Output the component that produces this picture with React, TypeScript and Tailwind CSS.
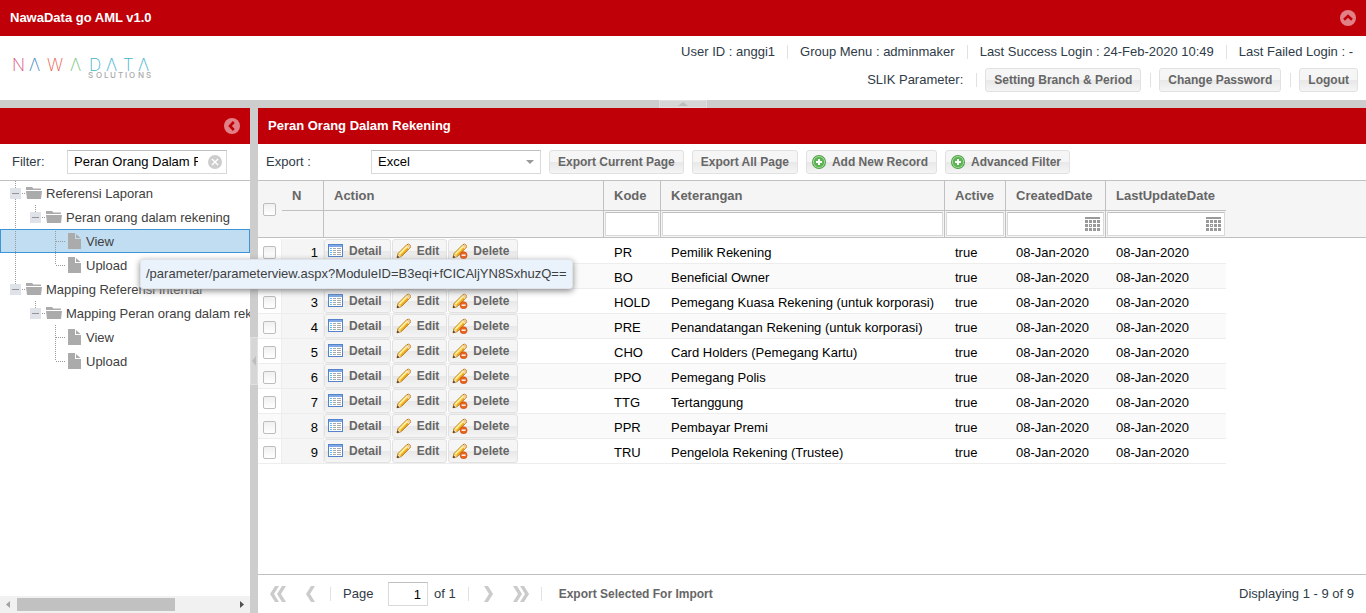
import React, { useState } from "react";

const BTN =
  "flex h-6 shrink-0 items-center whitespace-nowrap rounded-[3px] border border-[#e1e1e1] bg-[linear-gradient(#f6f6f6,#f5f5f5_50%,#e8e8e8_51%,#f5f5f5)] text-[12px] font-bold text-[#666]";

function Separator() {
  return <span className="h-3.5 w-px shrink-0 bg-[#e1e1e1]" />;
}

function TextButton({ children }: { children: React.ReactNode }) {
  return <button className={`${BTN} px-2`}>{children}</button>;
}

function Logo() {
  return (
    <svg role="img" aria-label="Nawadata Solutions" width="150" height="40" viewBox="0 0 150 40" className="ml-3 mt-3 shrink-0">
      <g fontFamily="Inter, sans-serif" fontWeight="200" fontSize="17">
        <text x="0" y="23" fill="#d8527f">N</text>
        <text x="17" y="23" fill="#4287bd">Λ</text>
        <text x="35" y="23" fill="#e8604f">W</text>
        <text x="58" y="23" fill="#76c27a">Λ</text>
        <text x="77" y="23" fill="#41b3cf">D</text>
        <text x="94" y="23" fill="#41b3cf">Λ</text>
        <text x="111" y="23" fill="#41b3cf">T</text>
        <text x="126" y="23" fill="#41b3cf">Λ</text>
      </g>
      <text x="76 84 92 98 106 113 117 126 134" y="30" fill="#a9a9a9" fontFamily="Inter, sans-serif" fontWeight="500" fontSize="8">
        SOLUTIONS
      </text>
    </svg>
  );
}

function CircleChevron({ up }: { up?: boolean }) {
  return (
    <svg width="16" height="16" viewBox="0 0 16 16">
      <circle cx="8" cy="8" r="8" fill="#e28087" />
      <path d={up ? "M4 9.8 8 6l4 3.8" : "M9.8 4 6 8l3.8 4"} fill="none" stroke="#c00008" strokeWidth="2.6" />
    </svg>
  );
}

function PlusIcon() {
  return (
    <svg width="16" height="16" viewBox="0 0 16 16">
      <circle cx="8" cy="8" r="7" fill="#4aa046" />
      <circle cx="8" cy="8" r="6" fill="#b5e0a9" />
      <circle cx="8" cy="8" r="5.2" fill="#5cb452" />
      <path d="M8 5v6M5 8h6" stroke="#fff" strokeWidth="2" />
    </svg>
  );
}

function DetailIcon() {
  return (
    <svg width="16" height="16" viewBox="0 0 16 16">
      <rect x=".5" y="1.5" width="14" height="12" fill="#fff" stroke="#5683c8" />
      <rect x="1" y="2" width="13" height="2" fill="#7ea9e6" />
      <path d="M2 5.5h2M2 7.5h2M2 9.5h2M2 11.5h2" stroke="#62bdf0" />
      <path d="M5 5.5h3M9 5.5h4M5 7.5h3M9 7.5h4M5 9.5h3M9 9.5h4M5 11.5h3M9 11.5h4" stroke="#a9a9a9" />
    </svg>
  );
}

function PencilIcon({ remove }: { remove?: boolean }) {
  return (
    <svg width="16" height="16" viewBox="0 0 16 16">
      <path d="M1 14.8 2 10.6 10.8 1.7Q12.4.6 13.8 1.7 15.2 3 14.2 4.7L5.3 13.6Z" fill="#f6cf45" stroke="#b77b22" />
      <path d="M3.4 11 11 3.2" stroke="#fff2a2" strokeWidth="1.5" />
      <path d="m5 12.6 7.9-7.8" stroke="#e79d22" strokeWidth="1.2" />
      <path d="m10.4 2.8 2.8 2.6" stroke="#f2e2cc" strokeWidth="1.4" />
      <path d="M12 2.2Q13.8 2.4 13.9 4" stroke="#f3c79c" strokeWidth="1.8" fill="none" />
      <path d="M1.4 14.4 2.2 11.2 4.8 13.5Z" fill="#f3d9b4" />
      <path d="m.8 15 .7-2.6 1.9 1.9Z" fill="#49331c" />
      {remove && (
        <>
          <circle cx="11.6" cy="12.2" r="3.5" fill="#e9641c" stroke="#c9480b" strokeWidth=".6" />
          <path d="M9.6 12.2h4" stroke="#fff" strokeWidth="1.4" />
        </>
      )}
    </svg>
  );
}

function CalendarIcon() {
  return (
    <svg width="15" height="14" viewBox="0 0 15 14" fill="#999" shapeRendering="crispEdges">
      <rect width="15" height="2" />
      {[3, 7, 11].map((y) =>
        [0, 4, 8, 12].map((x) => <rect key={`${x}-${y}`} x={x} y={y} width="3" height="3" />)
      )}
      <path d="M5 8h1v1H5z" fill="#fff" />
    </svg>
  );
}

const DOTS = { stroke: "#9a9a9a", strokeDasharray: "1 1", shapeRendering: "crispEdges" as const };

function Elbow({ kind }: { kind: "blank" | "line" | "minus" | "minusEnd" | "tee" | "end" }) {
  const full = kind === "line" || kind === "minus" || kind === "tee";
  const half = kind === "end" || kind === "minusEnd";
  const box = kind.startsWith("minus");
  return (
    <svg width="20" height="24" viewBox="0 0 20 24" className="shrink-0">
      {full && <path d="M9.5 0v24" {...DOTS} />}
      {half && <path d="M9.5 0v12" {...DOTS} />}
      {(box || kind === "tee" || kind === "end") && <path d="M10 12.5h9" {...DOTS} />}
      {box && (
        <>
          <rect x="4" y="7" width="11" height="11" fill="#dfe3e9" />
          <path d="M6 12.5h7" stroke="#8f959b" shapeRendering="crispEdges" />
        </>
      )}
    </svg>
  );
}

function FolderIcon() {
  return (
    <svg width="20" height="16" viewBox="0 0 20 16" fill="#ababab" className="shrink-0">
      <path d="M0 2h6l1.5 1.5H15V5H0zM0 6h16l-1 8H1z" />
    </svg>
  );
}

function FileIcon() {
  return (
    <svg width="20" height="16" viewBox="0 0 20 16" fill="#ababab" className="shrink-0">
      <path d="M2 0h7v6h6v10H2zM10 1l4.5 4H10z" />
    </svg>
  );
}

type Kind = React.ComponentProps<typeof Elbow>["kind"];
const TREE: { id: number; elbows: Kind[]; label: string; leaf?: boolean }[] = [
  { id: 1, elbows: ["minus"], label: "Referensi Laporan" },
  { id: 2, elbows: ["line", "minusEnd"], label: "Peran orang dalam rekening" },
  { id: 3, elbows: ["line", "blank", "tee"], label: "View", leaf: true },
  { id: 4, elbows: ["line", "blank", "end"], label: "Upload", leaf: true },
  { id: 5, elbows: ["minusEnd"], label: "Mapping Referensi Internal" },
  { id: 6, elbows: ["blank", "minusEnd"], label: "Mapping Peran orang dalam rekening" },
  { id: 7, elbows: ["blank", "blank", "tee"], label: "View", leaf: true },
  { id: 8, elbows: ["blank", "blank", "end"], label: "Upload", leaf: true },
];

const ROWS = [
  ["PR", "Pemilik Rekening"],
  ["BO", "Beneficial Owner"],
  ["HOLD", "Pemegang Kuasa Rekening (untuk korporasi)"],
  ["PRE", "Penandatangan Rekening (untuk korporasi)"],
  ["CHO", "Card Holders (Pemegang Kartu)"],
  ["PPO", "Pemegang Polis"],
  ["TTG", "Tertanggung"],
  ["PPR", "Pembayar Premi"],
  ["TRU", "Pengelola Rekening (Trustee)"],
];

function Header() {
  return (
    <header className="shrink-0">
      <div className="flex h-9 items-center justify-between bg-[#c00008] pl-2.5 pr-2.5">
        <h1 className="text-[13px] font-bold text-white">NawaData go AML v1.0</h1>
        <button aria-label="Collapse header">
          <CircleChevron up />
        </button>
      </div>
      <div className="flex h-16 items-start justify-between">
        <Logo />
        <div className="flex flex-col items-end gap-1 pr-2 pt-1 text-[13px] text-[#2f3b47]">
          <div className="flex h-6 items-center gap-3 whitespace-nowrap pr-[5px]">
            <span>User ID : anggi1</span>
            <Separator />
            <span>Group Menu : adminmaker</span>
            <Separator />
            <span>Last Success Login : 24-Feb-2020 10:49</span>
            <Separator />
            <span>Last Failed Login : -</span>
          </div>
          <div className="flex h-6 items-center gap-2 whitespace-nowrap">
            <span className="pr-[5px]">SLIK Parameter:</span>
            <Separator />
            <div className="pr-px">
              <TextButton>Setting Branch &amp; Period</TextButton>
            </div>
            <Separator />
            <div className="pr-px">
              <TextButton>Change Password</TextButton>
            </div>
            <Separator />
            <TextButton>Logout</TextButton>
          </div>
        </div>
      </div>
    </header>
  );
}

function Sidebar() {
  const [filter, setFilter] = useState("Peran Orang Dalam Rekening");
  const [selected, setSelected] = useState(3);
  return (
    <aside className="flex w-[250px] shrink-0 flex-col">
      <div className="flex h-9 shrink-0 items-center justify-end bg-[#c00008] pr-2.5">
        <button aria-label="Collapse menu">
          <CircleChevron />
        </button>
      </div>
      <div className="flex h-[37px] shrink-0 items-center border-b border-[#c0c0c0] pl-3 text-[13px]">
        <label htmlFor="filter" className="w-[55px] text-[#2f3b47]">
          Filter:
        </label>
        <div className="flex h-6 w-40 items-center border border-[#d9d9d9] border-t-[#c0c0c0] pl-1.5 pr-1">
          <input
            id="filter"
            value={filter}
            onChange={(e) => setFilter(e.target.value)}
            className="w-[124px] text-black outline-none"
          />
          <button aria-label="Clear filter" onClick={() => setFilter("")} className="ml-auto">
            <svg width="14" height="14" viewBox="0 0 14 14">
              <circle cx="7" cy="7" r="7" fill="#cdcdcd" />
              <path d="m4 4 6 6m0-6-6 6" stroke="#fff" strokeWidth="1.4" />
            </svg>
          </button>
        </div>
      </div>
      <ul className="min-h-0 flex-1 overflow-hidden text-[13px] text-[#404040]">
        {TREE.map((n) => (
          <li key={n.id}>
            <button
              onClick={() => setSelected(n.id)}
              className={`flex h-6 w-full items-center whitespace-nowrap pl-1.5 ${
                selected === n.id ? "bg-[#c1ddf1] outline outline-1 -outline-offset-1 outline-[#3d94d6]" : ""
              }`}
            >
              {n.elbows.map((k, i) => (
                <Elbow key={i} kind={k} />
              ))}
              {n.leaf ? <FileIcon /> : <FolderIcon />}
              <span className="pt-0.5">{n.label}</span>
            </button>
          </li>
        ))}
      </ul>
      <div className="flex h-[17px] shrink-0 items-center bg-[#f1f1f1] px-1.5">
        <svg width="4" height="7" viewBox="0 0 4 7" fill="#a3a3a3">
          <path d="M4 0v7L0 3.5z" />
        </svg>
        <div className="flex-1 px-[7px]">
          <div className="h-[13px] w-[73%] bg-[#c1c1c1]" />
        </div>
        <svg width="4" height="7" viewBox="0 0 4 7" fill="#505050">
          <path d="M0 0v7l4-3.5z" />
        </svg>
      </div>
    </aside>
  );
}

const CHECK =
  "block size-[13px] appearance-none rounded-[2px] border border-[#bdbdbd] bg-[linear-gradient(#f0f0f0,#fff)] checked:bg-[#3d94d6]";
const TH = "border-b border-r border-[#c0c0c0] px-2.5 text-left font-bold";
const TF = "border-b border-r border-[#c0c0c0] p-px";
const TD = "border-b border-[#ededed] px-2.5 pt-1.5 align-top leading-[15px] whitespace-nowrap";

function FilterBox({ label, date }: { label: string; date?: boolean }) {
  return (
    <div className="flex h-6 items-center border border-[#d9d9d9] border-t-[#c0c0c0] bg-white">
      <input aria-label={label} className="h-5 w-full min-w-0 px-1 outline-none" />
      {date && (
        <button aria-label={`${label} calendar`} className="mr-[3px] shrink-0">
          <CalendarIcon />
        </button>
      )}
    </div>
  );
}

function Grid() {
  return (
    <table className="w-full table-fixed border-separate border-spacing-0 text-[13px]">
      <colgroup>
        <col className="w-6" />
        <col className="w-[42px]" />
        <col className="w-[280px]" />
        <col className="w-[57px]" />
        <col className="w-[284px]" />
        <col className="w-[61px]" />
        <col className="w-[100px]" />
        <col className="w-[120px]" />
        <col />
      </colgroup>
      <thead className="bg-[#f5f5f5] text-[#666]">
        <tr className="h-[30px]">
          <th rowSpan={2} className="border-b border-[#c0c0c0] pl-[5px]">
            <input type="checkbox" aria-label="Select all" className={CHECK} />
          </th>
          <th className={TH}>N</th>
          <th className={TH}>Action</th>
          <th className={TH}>Kode</th>
          <th className={TH}>Keterangan</th>
          <th className={TH}>Active</th>
          <th className={TH}>CreatedDate</th>
          <th className="border-b border-[#c0c0c0] px-2.5 text-left font-bold">LastUpdateDate</th>
          <th rowSpan={2} className="border-b border-[#c0c0c0]" />
        </tr>
        <tr className="h-[27px]">
          <td className={TF} />
          <td className={TF} />
          <td className={TF}><FilterBox label="Kode" /></td>
          <td className={TF}><FilterBox label="Keterangan" /></td>
          <td className={TF}><FilterBox label="Active" /></td>
          <td className={TF}><FilterBox label="CreatedDate" date /></td>
          <td className="border-b border-[#c0c0c0] p-px"><FilterBox label="LastUpdateDate" date /></td>
        </tr>
      </thead>
      <tbody className="text-black before:block before:h-px before:content-['']">
        {ROWS.map(([kode, ket], i) => (
          <tr key={kode} className="h-[25px] [&:nth-child(even)>td:not(:last-child)]:bg-[#fafafa]">
            <td className="border-b border-r border-[#ededed] pl-[5px] pt-[7px] align-top">
              <input type="checkbox" aria-label={`Select ${kode}`} className={CHECK} />
            </td>
            <td className="border-b border-r border-[#ededed] bg-[#f5f5f5]! pr-[5px] pt-1.5 text-right align-top leading-[15px]">{i + 1}</td>
            <td className="border-b border-[#ededed] p-0 align-top">
              <div className="flex gap-px">
                <button className={`${BTN} gap-[5px] pl-[3px] pr-2`}>
                  <DetailIcon />
                  Detail
                </button>
                <button className={`${BTN} gap-[5px] pl-[3px] pr-[7px]`}>
                  <PencilIcon />
                  Edit
                </button>
                <button className={`${BTN} gap-[5px] pl-[3px] pr-2`}>
                  <PencilIcon remove />
                  Delete
                </button>
              </div>
            </td>
            <td className={TD}>{kode}</td>
            <td className={TD}>{ket}</td>
            <td className={TD}>true</td>
            <td className={TD}>08-Jan-2020</td>
            <td className={TD}>08-Jan-2020</td>
            <td />
          </tr>
        ))}
      </tbody>
    </table>
  );
}

function PageArrow({ label, double, next }: { label: string; double?: boolean; next?: boolean }) {
  const one = next ? "M0 0h4l5 8-5 8H0l5-8z" : "M9 0H5L0 8l5 8h4L4 8z";
  const two = next ? "M7 0h4l5 8-5 8H7l5-8z" : "M16 0h-4L7 8l5 8h4l-5-8z";
  return (
    <button aria-label={label} className="flex w-6 shrink-0 justify-center">
      <svg width={double ? 16 : 9} height="16" viewBox={double ? "0 0 16 16" : "0 0 9 16"} fill="#cbcbcb">
        <path d={one} />
        {double && <path d={two} />}
      </svg>
    </button>
  );
}

function Pager() {
  return (
    <footer className="flex h-[39px] shrink-0 items-center whitespace-nowrap border-t border-[#c0c0c0] pl-2 pr-3 text-[13px] text-[#2f3b47]">
      <div className="flex items-center gap-2">
        <PageArrow label="First page" double />
        <PageArrow label="Previous page" />
      </div>
      <div className="ml-2 flex items-center">
        <Separator />
        <label htmlFor="page" className="ml-3 w-[45px]">Page</label>
        <input
          id="page"
          defaultValue="1"
          className="h-6 w-10 border border-[#d9d9d9] border-t-[#c0c0c0] pr-1.5 text-right text-black outline-none"
        />
        <span className="ml-1.5 mr-3">of 1</span>
        <Separator />
      </div>
      <div className="mx-2 flex items-center gap-2">
        <PageArrow label="Next page" next />
        <PageArrow label="Last page" double next />
      </div>
      <Separator />
      <button className="ml-[17px] text-[12px] font-bold text-[#666]">Export Selected For Import</button>
      <span className="ml-auto">Displaying 1 - 9 of 9</span>
    </footer>
  );
}

function MainPanel() {
  return (
    <main className="flex min-w-0 flex-1 flex-col">
      <div className="flex h-9 shrink-0 items-center bg-[#c00008] px-2.5">
        <h2 className="text-[13px] font-bold text-white">Peran Orang Dalam Rekening</h2>
      </div>
      <div className="flex h-[37px] shrink-0 items-center gap-2 border-b border-[#c0c0c0] pl-2 text-[13px]">
        <label htmlFor="export" className="w-[97px] text-[#2f3b47]">Export :</label>
        <div className="relative">
          <select
            id="export"
            className="block h-6 w-[170px] appearance-none border border-[#d9d9d9] border-t-[#c0c0c0] bg-white px-1.5 text-black outline-none"
          >
            <option>Excel</option>
          </select>
          <svg width="8" height="4" viewBox="0 0 8 4" fill="#999" className="pointer-events-none absolute right-[7px] top-2.5">
            <path d="M0 0h8L4 4z" />
          </svg>
        </div>
        <TextButton>Export Current Page</TextButton>
        <TextButton>Export All Page</TextButton>
        <button className={`${BTN} gap-[5px] pl-1 pr-2`}>
          <PlusIcon />
          Add New Record
        </button>
        <button className={`${BTN} gap-[5px] pl-1 pr-2`}>
          <PlusIcon />
          Advanced Filter
        </button>
      </div>
      <div className="min-h-0 flex-1 overflow-hidden">
        <Grid />
      </div>
      <Pager />
    </main>
  );
}

export default function App() {
  return (
    <div className="relative flex h-screen flex-col overflow-hidden bg-white font-['Liberation_Sans',Arial,sans-serif]">
      <Header />
      <div className="flex h-2 shrink-0 justify-center bg-[#cdcdcd]">
        <button aria-label="Toggle header" className="flex w-12 items-center justify-center border border-[#e0e0e0] bg-[#d6d6d6]">
          <svg width="10" height="4" viewBox="0 0 10 4" fill="#bdbdbd">
            <path d="M0 4h10L5 0z" />
          </svg>
        </button>
      </div>
      <div className="flex min-h-0 flex-1">
        <Sidebar />
        <div className="flex w-2 shrink-0 flex-col justify-center bg-[#cdcdcd]">
          <button aria-label="Toggle menu" className="flex h-12 items-center justify-center border border-[#e0e0e0] bg-[#d6d6d6]">
            <svg width="4" height="10" viewBox="0 0 4 10" fill="#bdbdbd">
              <path d="M4 0v10L0 5z" />
            </svg>
          </button>
        </div>
        <MainPanel />
      </div>
      <div
        role="tooltip"
        className="absolute left-[140px] top-[259px] whitespace-nowrap rounded-[3px] border border-[#dfe3e8] bg-[#eaf3fc] px-[5px] py-[5px] text-[13px] leading-[18px] text-[#404040] shadow-[0_2px_6px_#888]"
      >
        /parameter/parameterview.aspx?ModuleID=B3eqi+fCICAljYN8SxhuzQ==
      </div>
    </div>
  );
}
